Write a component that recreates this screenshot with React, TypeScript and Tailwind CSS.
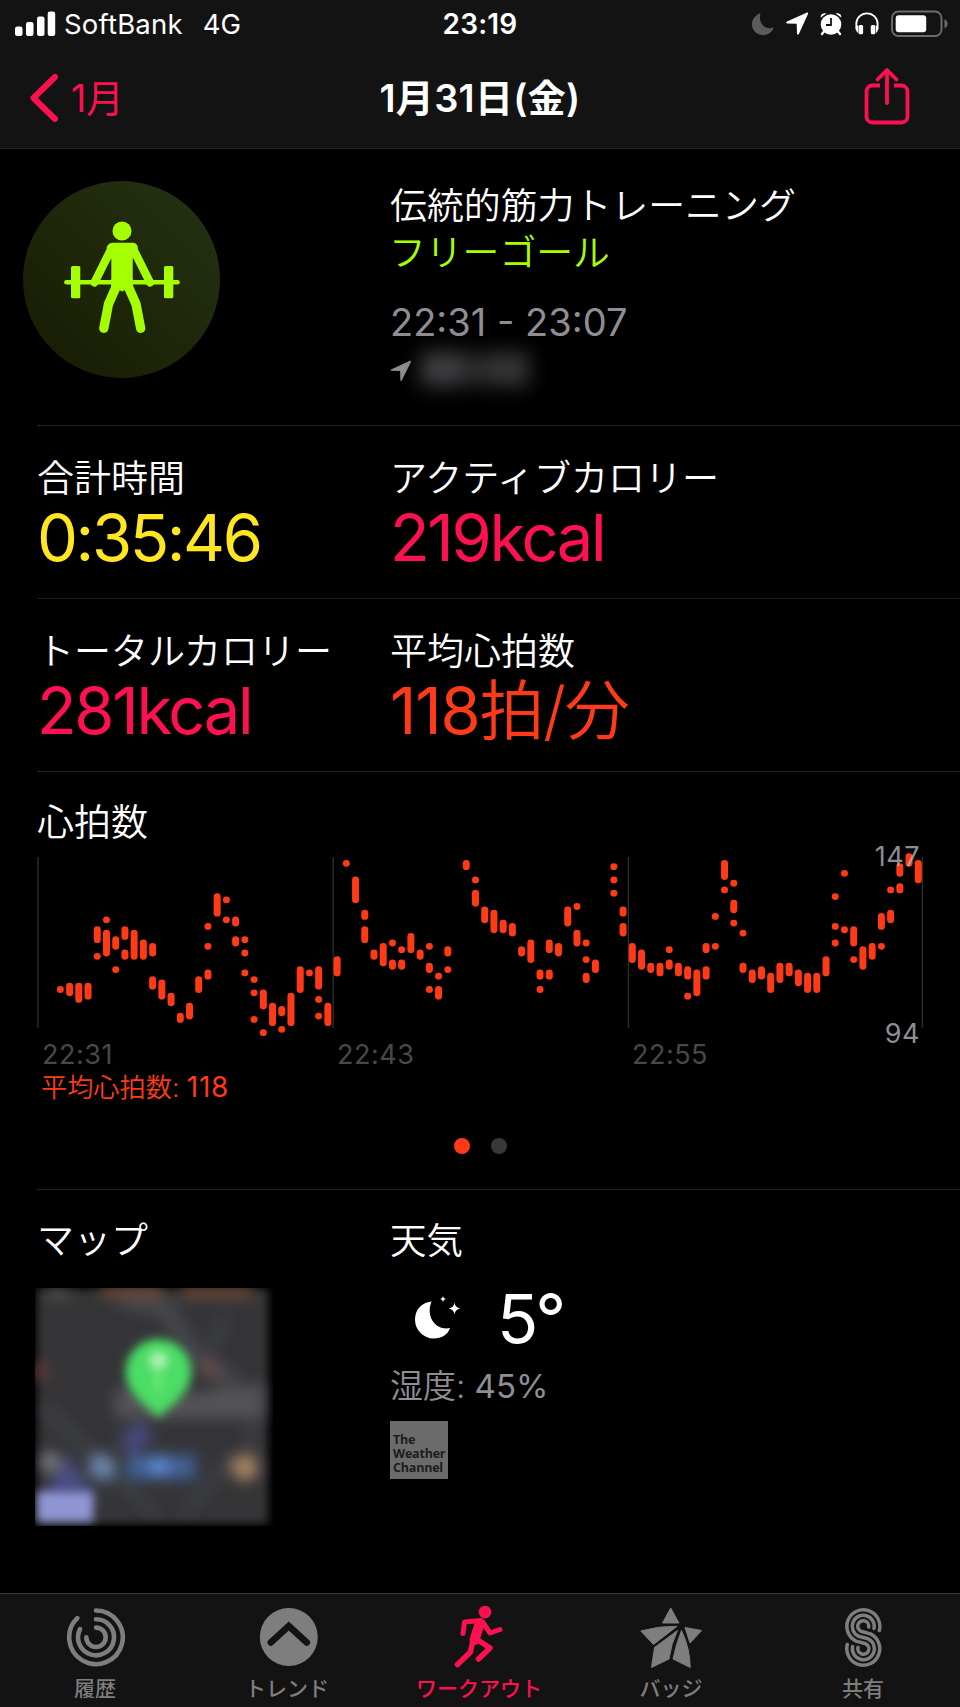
import type { ReactNode } from "react";
import clsx from "clsx";

// [slot, highest bpm, lowest bpm], one slot is 22.5 seconds
const heartRate: [number, number, number][] = [
  [2, 107, 107], [3, 108, 106], [4, 108, 104], [5, 108, 105],
  [6, 125, 122], [6, 117, 117], [7, 128, 128], [7, 124, 118],
  [8, 122, 120], [8, 113, 113], [9, 125, 123], [9, 118, 117],
  [10, 124, 117], [11, 121, 117], [12, 120, 118], [12, 110, 108],
  [13, 109, 105], [14, 105, 103], [15, 99, 98], [16, 102, 99],
  [17, 110, 107], [18, 126, 126], [18, 120, 120], [18, 112, 111],
  [19, 135, 130], [20, 134, 134], [20, 128, 128], [21, 128, 127],
  [21, 122, 121], [22, 122, 122], [22, 118, 118], [22, 112, 112],
  [23, 110, 110], [23, 106, 106], [23, 98, 98], [24, 106, 102],
  [24, 94, 94], [25, 102, 97], [26, 101, 100], [26, 95, 95],
  [27, 105, 97], [28, 113, 107], [29, 112, 112], [30, 113, 108],
  [30, 104, 104], [30, 99, 99], [31, 102, 97], [32, 116, 112],
  [33, 145, 145], [34, 140, 134], [35, 130, 129], [35, 125, 122],
  [36, 118, 117], [37, 120, 115], [38, 121, 121], [38, 115, 114],
  [39, 119, 119], [39, 115, 114], [40, 123, 119], [41, 118, 117],
  [42, 120, 120], [42, 114, 113], [42, 107, 107], [43, 111, 111],
  [43, 107, 105], [44, 119, 118], [44, 113, 113], [46, 145, 144],
  [47, 140, 140], [47, 136, 133], [48, 131, 128], [49, 130, 125],
  [50, 127, 125], [51, 126, 124], [52, 119, 118], [53, 121, 116],
  [54, 112, 111], [54, 107, 107], [55, 121, 119], [55, 112, 111],
  [56, 120, 118], [57, 131, 127], [58, 132, 132], [58, 124, 121],
  [59, 121, 121], [59, 116, 116], [59, 111, 110], [60, 115, 113],
  [62, 144, 144], [62, 140, 140], [62, 136, 136], [63, 131, 130],
  [63, 126, 124], [64, 120, 116], [65, 118, 114], [66, 114, 113],
  [67, 114, 112], [68, 119, 119], [68, 115, 114], [69, 114, 112],
  [70, 113, 111], [70, 105, 105], [71, 112, 106], [72, 120, 119],
  [72, 113, 111], [73, 129, 129], [73, 120, 120], [74, 145, 141],
  [74, 137, 137], [75, 139, 139], [75, 133, 131], [75, 127, 127],
  [76, 124, 124], [76, 114, 113], [77, 112, 110], [78, 113, 111],
  [79, 111, 107], [80, 114, 110], [81, 114, 112], [82, 112, 109],
  [83, 111, 107], [84, 111, 107], [85, 116, 112], [86, 135, 135],
  [86, 126, 126], [86, 121, 121], [87, 142, 142], [87, 125, 125],
  [88, 125, 121], [88, 116, 116], [89, 119, 114], [90, 120, 117],
  [91, 129, 126], [91, 120, 120], [92, 137, 137], [92, 130, 128],
  [93, 144, 142], [93, 138, 137], [94, 147, 145], [95, 145, 140],
];

const slotX = (slot: number) => 4.9 + slot * 9.225;
const bpmY = (bpm: number) => 9.7 + (147 - bpm) * 3.32;

function HeartRateChart() {
  return (
    <div className="relative h-48">
      <svg className="block overflow-visible" width="923" height="192" viewBox="0 0 923 192">
        {[0.9, 296.2, 591.4, 885.4].map((x) => (
          <line key={x} x1={x} x2={x} y1="10" y2="181" stroke="#2c2c2d" strokeWidth="1.4" />
        ))}
        {heartRate.map(([slot, high, low]) => (
          <rect
            key={`${slot}-${high}`}
            x={slotX(slot) - 3.5}
            y={bpmY(high) - 3.4}
            width="7"
            height={bpmY(low) - bpmY(high) + 6.8}
            rx="3.4"
            fill="#ff3a17"
          />
        ))}
      </svg>
      <span className="absolute right-[40px] -top-[5px] text-[27px] leading-[30px] tracking-[0.5px] text-[#b4b4ba]/80">147</span>
      <span className="absolute right-[40px] top-[172px] text-[27px] leading-[30px] tracking-[0.5px] text-[#8e8e93]">94</span>
    </div>
  );
}

function StatusBar() {
  return (
    <div className="relative flex h-12 items-center justify-between pl-[15px] pr-3 text-white">
      <div className="flex items-center">
        <svg width="41" height="26" viewBox="0 0 41 26" fill="currentColor">
          <rect x="0" y="15.5" width="7.5" height="9.5" rx="2.2" />
          <rect x="11" y="11" width="7.5" height="14" rx="2.2" />
          <rect x="22" y="5.5" width="7.5" height="19.5" rx="2.2" />
          <rect x="32.7" y="0.5" width="7.5" height="24.5" rx="2.2" />
        </svg>
        <span className="ml-2 mt-px text-[27.5px] tracking-[0.2px]">SoftBank</span>
        <span className="ml-5 mt-px text-[27.5px]">4G</span>
      </div>
      <span className="absolute left-1/2 top-[3px] -translate-x-1/2 text-[28px] leading-[42px] font-semibold tracking-[0.2px]">23:19</span>
      <div className="flex items-center">
        <svg width="22" height="24" viewBox="0 0 22 24" fill="#5b5b5d">
          <path d="M8.500 1C2.500 3.500 0 8 0 12.300 0 18.500 4.800 23 11 23c4.800 0 9.200-2.800 10.800-7.600C14 18.500 5.500 12 8.500 1Z" />
        </svg>
        <svg className="ml-3" width="22" height="24" viewBox="0 0 22 24" fill="currentColor">
          <path d="M21 .6 1 9.600c-1.200.7-.8 1.900.3 1.900l9.400.3.3 9.800c.1 1.400 1.400 1.500 1.900.3L22 2c.4-1-.1-1.700-1-1.400Z" />
        </svg>
        <svg className="ml-3" width="22" height="24" viewBox="0 0 22 24">
          <g stroke="currentColor" strokeWidth="2.400" strokeLinecap="round">
            <path d="m4 19.500-2 2.500M18 19.500l2 2.500" />
          </g>
          <circle cx="11" cy="12.500" r="10.300" fill="currentColor" />
          <path d="M.8 5.500C0 3 3 .3 6.300 1.500ZM21.200 5.500C22 3 19 .3 15.700 1.500Z" fill="currentColor" />
          <path d="M11 6v7H6" fill="none" stroke="#131313" strokeWidth="1.800" />
        </svg>
        <svg className="ml-[13px]" width="24" height="24" viewBox="0 0 24 24">
          <path d="M1.300 17.500V12a10.600 10.600 0 0 1 21.300 0v5.500" fill="none" stroke="currentColor" strokeWidth="1.800" />
          <rect x="3.500" y="13" width="4.600" height="9.200" rx="1.500" fill="currentColor" />
          <rect x="15.800" y="13" width="4.600" height="9.200" rx="1.500" fill="currentColor" />
          <path d="M1 13.500h2v7H2.200L1 18ZM23 13.500h-2v7h.8L23 18Z" fill="currentColor" />
        </svg>
        <svg className="ml-3" width="57" height="28" viewBox="0 0 57 28">
          <rect x="1" y="1.500" width="49.500" height="24.500" rx="6.500" fill="none" stroke="#6d6d6e" strokeWidth="1.900" />
          <rect x="4.700" y="5.300" width="30.500" height="17" rx="3" fill="currentColor" />
          <path d="M53.500 9.300c4 1.500 4 7.500 0 9Z" fill="#6d6d6e" />
        </svg>
      </div>
    </div>
  );
}

function NavBar() {
  return (
    <div className="relative flex h-[100px] items-center justify-between pl-[30px] pr-[50px]">
      <button className="flex items-center text-[#fb1150]">
        <svg width="29" height="50" viewBox="0 0 29 50" fill="none">
          <path d="M25 4 3.500 25 25 46" stroke="currentColor" strokeWidth="6" strokeLinecap="round" strokeLinejoin="round" />
        </svg>
        <span className="ml-3 mt-0.5 text-[37.5px]">1月</span>
      </button>
      <h1 className="absolute left-1/2 top-[22px] -translate-x-1/2 whitespace-nowrap text-[38px] leading-[56px] font-semibold tracking-[0.3px] text-white">
        1月31日(金)
      </h1>
      <button className="-mt-1 text-[#fb1150]">
        <svg width="46" height="58" viewBox="0 0 46 58" fill="none" stroke="currentColor" strokeWidth="3.800">
          <path d="M16 18.500H8.500a6 6 0 0 0-6 6V49.500a6 6 0 0 0 6 6h29a6 6 0 0 0 6-6V24.500a6 6 0 0 0-6-6H30" />
          <path d="M23 36V4M13.500 12.500 23 3l9.500 9.500" strokeLinecap="round" strokeLinejoin="round" />
        </svg>
      </button>
    </div>
  );
}

function LocationArrow() {
  return (
    <svg width="22" height="22" viewBox="0 0 22 22" fill="#8e8e93">
      <path d="M20 .8 1 9.400c-.8.5-.5 1.300.4 1.300l8.700.3.3 9.300c0 1.100.9 1.100 1.300.2L21 2c.3-.9-.2-1.500-1-1.200Z" />
    </svg>
  );
}

function WorkoutBadge() {
  return (
    <div className="flex size-[197px] items-center justify-center rounded-full bg-linear-to-tr from-[#171b02] to-[#263315]">
      <svg width="197" height="197" viewBox="0 0 197 197" fill="none" stroke="#a6ff00" strokeLinecap="round" strokeLinejoin="round">
        <circle cx="99" cy="50" r="9.500" fill="#a6ff00" stroke="none" />
        <path d="M43.500 101.200H154.500" strokeWidth="4.600" />
        <rect x="48" y="85" width="9.300" height="32.300" rx="1.500" fill="#a6ff00" stroke="none" />
        <rect x="141" y="85" width="9.300" height="32.300" rx="1.500" fill="#a6ff00" stroke="none" />
        <path d="M88.500 67.500 71.500 101.500M110 67.500l17 34" strokeWidth="8.300" />
        <path d="M89 61.700H110.500Q114 62 115 67L109.700 78V106H88.300V78L83.500 67Q85 62 89 61.700Z" fill="#a6ff00" stroke="none" />
        <path d="M93.500 105 85.500 123 80.800 147.300M105 105l8 18 4.700 24.300" strokeWidth="9.300" />
        <path d="M88.300 98h21.400v7L99.200 110.500 88.300 105Z" fill="#a6ff00" stroke="none" />
      </svg>
    </div>
  );
}

function Stat({ label, value, color }: { label: string; value: ReactNode; color: string }) {
  return (
    <div className="whitespace-nowrap">
      <div className="text-[37px] font-[350] leading-[50px] text-white">{label}</div>
      <div className={clsx("-mt-0.5 text-[65px] leading-[72px]", color)}>{value}</div>
    </div>
  );
}

// Blurred map preview with the start pin
function MapPreview() {
  return (
    <svg className="mt-[22px] -ml-0.5 block" width="238" height="238" viewBox="0 0 238 238">
      <defs>
        <filter id="soft" x="-30%" y="-30%" width="160%" height="160%">
          <feGaussianBlur stdDeviation="7" />
        </filter>
        <filter id="pin" x="-30%" y="-30%" width="160%" height="160%">
          <feGaussianBlur stdDeviation="4.800" />
        </filter>
        <filter id="edge" x="-10%" y="-10%" width="120%" height="120%">
          <feGaussianBlur stdDeviation="4.500" />
        </filter>
        <clipPath id="frame">
          <rect width="238" height="238" />
        </clipPath>
      </defs>
      <g clipPath="url(#frame)">
        <rect x="2" y="1" width="231" height="235" fill="#353639" filter="url(#edge)" />
        <g filter="url(#soft)">
          <path d="M85 10 130 20 160 70 200 95" fill="none" stroke="#45474b" strokeWidth="18" />
          <path d="M10 120 60 170 120 225M190 30 170 75M215 130V190M150 225l50-60" fill="none" stroke="#3e4044" strokeWidth="9" />
          <path d="M80 100 160 105 228 95V130H80Z" fill="#525256" />
          <path d="M66 4H128M146 4H218" stroke="#6b4630" strokeWidth="12" />
          <path d="M12 5H34" stroke="#57534c" strokeWidth="9" />
          <circle cx="5" cy="83" r="8" fill="#6e3434" />
          <circle cx="175" cy="80" r="9" fill="#6b4c4c" />
          <path d="M90 160 112 140" stroke="#484a80" strokeWidth="20" />
          <path d="M6 214 32 166 62 214Z" fill="#4c4e84" />
          <circle cx="15" cy="174" r="10" fill="#78797e" />
          <circle cx="67" cy="179" r="13" fill="#6a86ac" />
          <path d="M92 179H160" stroke="#426297" strokeWidth="24" />
          <circle cx="124" cy="178" r="9" fill="#5f8cda" />
          <circle cx="210" cy="180" r="13" fill="#a38262" />
        </g>
        <rect x="2" y="204" width="56" height="30" fill="#8f96d4" filter="url(#pin)" />
        <g filter="url(#pin)">
          <path d="M123.500 130C114 119 90.500 107 90.500 84a33 33 0 0 1 66 0c0 23-24 35-33 46Z" fill="#4cdd65" />
          <circle cx="123.500" cy="73" r="8" fill="#b4f8ba" />
          <path d="M123.500 78v26" stroke="#6ae87b" strokeWidth="7" />
        </g>
      </g>
    </svg>
  );
}

function ActivityIcon() {
  return (
    <svg width="60" height="62" viewBox="0 0 60 62" fill="none" stroke="currentColor" strokeWidth="4.600" strokeLinecap="round">
      <path d="M30 3.500A26.800 26.800 0 1 1 11.300 11.100" />
      <path d="M30 12.300A18 18 0 1 1 14 22.100" />
      <path d="M30 20.600A9.700 9.700 0 1 1 20.300 30.300" />
    </svg>
  );
}

function TrendsIcon() {
  return (
    <svg width="60" height="62" viewBox="0 0 60 62" fill="none">
      <circle cx="30.800" cy="30" r="29" fill="currentColor" />
      <path d="M12.800 35.500 30.800 19l18 16.500" stroke="#131313" strokeWidth="6.500" strokeLinecap="round" />
    </svg>
  );
}

function WorkoutIcon() {
  return (
    <svg width="60" height="66" viewBox="0 0 60 66" fill="none" stroke="currentColor" strokeLinecap="round" strokeLinejoin="round">
      <circle cx="35" cy="7" r="6.300" fill="currentColor" stroke="none" />
      <path d="M13 28.500 14.500 17 31 15.500" strokeWidth="5" />
      <path d="M29.500 19 24.500 35" strokeWidth="10" />
      <path d="M33 17.500 40 28 50 24.500" strokeWidth="5" />
      <path d="M23 35 20.500 47 7.500 59.500" strokeWidth="5.500" />
      <path d="M27 34.500 40 43 28.500 54" strokeWidth="5.500" />
    </svg>
  );
}

function BadgesIcon() {
  return (
    <svg width="64" height="64" viewBox="0 0 64 64" fill="currentColor" stroke="currentColor" strokeWidth="1" strokeLinejoin="round">
      <path d="M30.700 2 39 17H22.500Z" />
      <path d="M.8 25Q18 20 37 20.300L13.500 38.500Z" />
      <path d="M45 21.500 61.700 24.500 50 37Z" />
      <path d="M37.500 24.500Q31 38 29 53L11.500 61.500 14.500 41.500Z" />
      <path d="M41.500 24.500Q50 42 50.200 61.500L33 53Q36 38 41.500 24.500Z" />
    </svg>
  );
}

function SharingIcon() {
  return (
    <svg width="40" height="62" viewBox="0 0 40 62" fill="none" stroke="currentColor" strokeWidth="3.500" strokeLinecap="round" strokeLinejoin="round">
      <path d="M35.300 23.500A16.500 16.500 0 1 0 12.100 34.100L21.700 36.800A5.500 5.500 0 1 1 14 40.500" />
      <path d="M30 21.500A11 11 0 1 0 14.500 29.200L24.100 31.800A11 11 0 1 1 8.600 39.500" />
      <path d="M24.700 20A5.500 5.500 0 1 0 16.900 24.200L26.500 26.900A16.500 16.500 0 1 1 3.300 37.500" />
    </svg>
  );
}

const tabs = [
  { name: "履歴", icon: ActivityIcon },
  { name: "トレンド", icon: TrendsIcon },
  { name: "ワークアウト", icon: WorkoutIcon, active: true },
  { name: "バッジ", icon: BadgesIcon },
  { name: "共有", icon: SharingIcon },
];

function TabBar() {
  return (
    <nav className="grid h-[114px] grid-cols-5 border-t border-[#3a3a3a] bg-[#131313]">
      {tabs.map((tab) => (
        <div
          key={tab.name}
          className={clsx(
            "flex flex-col items-center",
            tab.active ? "text-[#fb1150]" : "text-[#7e7e7e]"
          )}
        >
          <div className="mt-2.5 flex h-[68px] items-center justify-center">
            <tab.icon />
          </div>
          <span className="-ml-0.5 text-[21px] font-medium leading-[34px]">{tab.name}</span>
        </div>
      ))}
    </nav>
  );
}

export default function App() {
  return (
    <div className="flex h-[1707px] w-[960px] flex-col overflow-hidden bg-black font-['Inter','Noto_Sans_CJK_JP',sans-serif]">
      <header className="h-[149px] border-b border-[#262626] bg-[#131313]">
        <StatusBar />
        <NavBar />
      </header>

      <main className="flex-1 pl-[37px]">
        <section className="grid h-[277px] grid-cols-[353px_1fr] border-b border-[#242425] pt-8">
          <div className="-ml-3.5">
            <WorkoutBadge />
          </div>
          <div className="whitespace-nowrap pt-px">
            <h2 className="text-[36.9px] font-[350] leading-[48px] text-white">伝統的筋力トレーニング</h2>
            <p className="-ml-px text-[36.8px] font-[350] leading-[46px] text-[#a6ff00]">フリーゴール</p>
            <p className="mt-[23px] text-[38px] leading-[46px] text-[#8e8e93]">22:31 - 23:07</p>
            <div className="flex h-[52px] items-center">
              <LocationArrow />
              <div className="ml-[9px] -mt-1 flex items-center blur-[10px]">
                <div className="h-[34px] w-10 bg-[#404043]" />
                <div className="h-8 w-7 bg-[#2b2b2d]" />
                <div className="h-[34px] w-10 bg-[#363639]" />
              </div>
            </div>
          </div>
        </section>

        <section className="grid h-[173px] grid-cols-[353px_1fr] border-b border-[#1b1b1c] pt-7">
          <Stat label="合計時間" value="0:35:46" color="tracking-[-2.4px] text-[#ffe620]" />
          <Stat label="アクティブカロリー" value="219kcal" color="tracking-[-2.3px] text-[#ff1050]" />
        </section>

        <section className="grid h-[173px] grid-cols-[353px_1fr] border-b border-[#242425] pt-7">
          <Stat label="トータルカロリー" value="281kcal" color="tracking-[-2.3px] text-[#ff1050]" />
          <Stat
            label="平均心拍数"
            value={<>118<span className="font-[350]">拍/分</span></>}
            color="tracking-[-1.2px] text-[#ff3a17]"
          />
        </section>

        <section className="h-[418px] border-b border-[#242425] pt-[26px]">
          <h3 className="-mb-px text-[37px] font-[350] leading-[50px] text-white">心拍数</h3>
          <HeartRateChart />
          <div className="flex pt-px pl-[5px] text-[27px] leading-[30px] tracking-[0.5px] text-[#48484a]">
            {["22:31", "22:43", "22:55"].map((time) => (
              <span key={time} className="w-[295px]">{time}</span>
            ))}
          </div>
          <p className="pl-1 text-[26.2px] font-[350] leading-[35px] text-[#ff3a17]">
            平均心拍数: <span className="text-[28px] font-normal tracking-[0.8px]">118</span>
          </p>
          <div className="mt-[33px] flex justify-center gap-[21px] pr-[37px]">
            <span className="size-4 rounded-full bg-[#ff3a17]" />
            <span className="size-4 rounded-full bg-[#38383a]" />
          </div>
        </section>

        <section className="grid grid-cols-[353px_1fr] pt-[26px]">
          <div>
            <h3 className="text-[37px] font-[350] leading-[50px] text-white">マップ</h3>
            <MapPreview />
          </div>
          <div>
            <h3 className="text-[36.5px] font-[350] leading-[50px] text-white">天気</h3>
            <div className="mt-[22px] flex h-[60px] items-center pl-[25px] text-white">
              <svg width="46" height="44" viewBox="0 0 46 44" fill="currentColor">
                <path d="M16.500 5.500C6 6.500 0 14 0 24a19 19 0 0 0 18.500 18.500c8 0 14.500-4 16.500-10.500C22 35 10 22 16.500 5.500Z" />
                <path d="M39.500 6.500q.6 5.200 5.800 6-5.200.8-5.800 6-.6-5.200-5.800-6 5.200-.8 5.800-6ZM28 0q.3 2.700 2.800 3-2.500.3-2.800 3-.3-2.700-2.800-3 2.500-.3 2.800-3Z" />
              </svg>
              <span className="ml-9 text-[68px] leading-[60px] tracking-[-3px]">5°</span>
            </div>
            <p className="mt-4 text-[33px] leading-[44px] font-[350] text-[#8e8e93]">
              湿度: <span className="font-normal">45%</span>
            </p>
            <div className="mt-[13px] flex size-[58px] flex-col justify-end bg-[#6b6b6b] pb-1 pl-[3px] font-['Open_Sans',sans-serif] text-[12.5px] font-bold leading-3.5 tracking-[-0.2px] text-[#1c1c1c]">
              <span>The</span>
              <span>Weather</span>
              <span>Channel</span>
            </div>
          </div>
        </section>
      </main>

      <TabBar />
    </div>
  );
}
